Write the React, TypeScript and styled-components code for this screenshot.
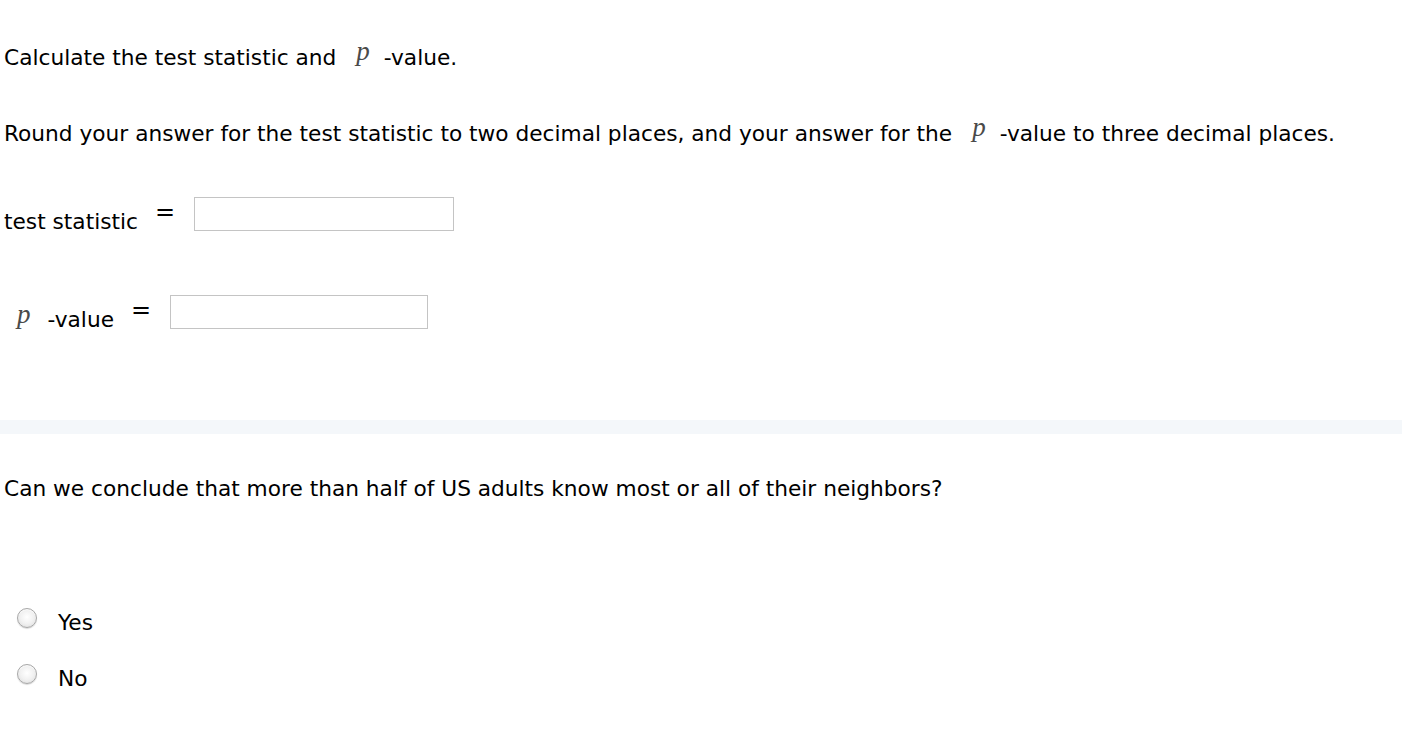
import React from "react";
import styled, { createGlobalStyle } from "styled-components";

const Global = createGlobalStyle`
  html, body { margin: 0; padding: 0; background: #fff; }
  body { font-family: "DejaVu Sans", Verdana, sans-serif; color: #000; }
`;

const Page = styled.div`
  display: flex;
  flex-direction: column;
  width: 1402px;
`;

const Section = styled.div<{ $pt: number; $pb: number }>`
  display: flex;
  flex-direction: column;
  padding: ${(p) => p.$pt}px 4px ${(p) => p.$pb}px 4px;
`;

const Para = styled.div<{ $mb?: number }>`
  font-size: 21.7px;
  line-height: 24px;
  height: 24px;
  white-space: nowrap;
  margin-bottom: ${(p) => p.$mb ?? 0}px;
`;

const PVar = styled.i<{ $ml?: number; $mr?: number }>`
  font-family: "Liberation Serif", "Times New Roman", serif;
  font-style: italic;
  font-size: 27px;
  line-height: 24px;
  color: #4a4a4a;
  display: inline-block;
  margin: 0 ${(p) => p.$mr ?? 14}px 0 ${(p) => p.$ml ?? 20}px;
  position: relative;
  top: -5px;
`;

const Row = styled.div<{ $mb?: number; $indent?: number }>`
  display: flex;
  align-items: center;
  font-size: 21.7px;
  height: 34px;
  padding-left: ${(p) => p.$indent ?? 0}px;
  margin-bottom: ${(p) => p.$mb ?? 0}px;
`;

const Label = styled.span`
  display: inline-flex;
  align-items: center;
  padding-top: 14px;
`;

const Eq = styled.span`
  font-size: 24px;
  margin: 0 19px 0 17px;
  position: relative;
  top: -2px;
`;

const Input = styled.input<{ $w: number }>`
  width: ${(p) => p.$w}px;
  height: 34px;
  box-sizing: border-box;
  border: 1px solid #c4c4c4;
  background: #fff;
  margin: 0;
  padding: 0 4px;
  font-size: 18px;
`;

const Band = styled.div`
  height: 14px;
  background: #f4f7fa;
`;

const RadioRow = styled.label<{ $mb?: number }>`
  display: flex;
  align-items: center;
  height: 34px;
  padding-left: 13px;
  font-size: 21.7px;
  margin-bottom: ${(p) => p.$mb ?? 0}px;
`;

const Radio = styled.span`
  width: 20px;
  height: 20px;
  border-radius: 50%;
  box-sizing: border-box;
  border: 1px solid #a8a8a8;
  background: radial-gradient(circle at 50% 45%, #ffffff 0%, #f1f1f1 50%, #d8d8d8 100%);
  box-shadow: inset 0 1px 1px rgba(255,255,255,0.8), 0 1px 1px rgba(0,0,0,0.15);
  margin-right: 21px;
  position: relative;
  top: -4px;
`;

export default function App() {
  return (
    <>
      <Global />
      <Page>
        <Section $pt={44} $pb={0}>
          <Para $mb={52}>
            Calculate the test statistic and<PVar>p</PVar>-value.
          </Para>
          <Para $mb={53}>
            Round your answer for the test statistic to two decimal places, and your answer for the<PVar>p</PVar>-value to three decimal places.
          </Para>
          <Row $mb={64}>
            <Label>test statistic</Label>
            <Eq>=</Eq>
            <Input $w={260} />
          </Row>
          <Row $mb={91} $indent={13}>
            <Label>
              <PVar $ml={0} $mr={17}>p</PVar>-value
            </Label>
            <Eq>=</Eq>
            <Input $w={258} />
          </Row>
        </Section>
        <Band />
        <Section $pt={43} $pb={40}>
          <Para $mb={104}>Can we conclude that more than half of US adults know most or all of their neighbors?</Para>
          <RadioRow $mb={22}>
            <Radio />
            Yes
          </RadioRow>
          <RadioRow>
            <Radio />
            No
          </RadioRow>
        </Section>
      </Page>
    </>
  );
}
